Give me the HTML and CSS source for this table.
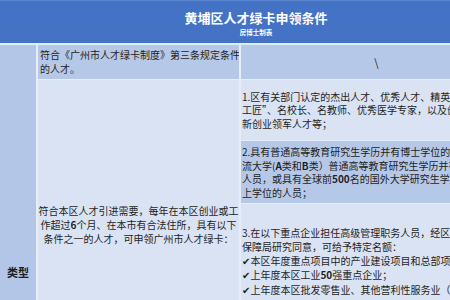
FILE: index.html
```
<!DOCTYPE html>
<html lang="zh">
<head>
<meta charset="utf-8">
<link rel="stylesheet" href="styles.css">
</head>
<body>
<div class="sheet">
  <header class="head">
    <div class="title">黄埔区人才绿卡申领条件</div>
    <div class="sub">房博士制表</div>
  </header>
  <div class="grid">
    <div class="type"><span>类型</span></div>
    <div class="c2 r1 dark"><div class="tx">符合《广州市人才绿卡制度》第三条规定条件<br>的人才。</div></div>
    <div class="c3 r1 dark slash"><div class="tx">\</div></div>
    <div class="c2 r2 light"><div class="tx">符合本区人才引进需要，每年在本区创业或工<br>作超过<b>6</b>个月、在本市有合法住所，具有以下<br>条件之一的人才，可申领广州市人才绿卡：</div></div>
    <div class="c3 s1 light"><div class="tx">1.区有关部门认定的杰出人才、优秀人才、精英人才、“羊城<br>工匠”、名校长、名教师、优秀医学专家，以及创<br>新创业领军人才等；</div></div>
    <div class="c3 s2 dark"><div class="tx">2.具有普通高等教育研究生学历并有博士学位的人员，或一<br>流大学(<b>A</b>类和<b>B</b>类）普通高等教育研究生学历并有硕士<br>人员，或具有全球前<b>500</b>名的国外大学研究生学历并有硕士以<br>上学位的人员；</div></div>
    <div class="c3 s3 light"><div class="tx">3.在以下重点企业担任高级管理职务人员，经区人力资源和社会<br>保障局研究同意，可给予特定名额：<br><i class="ck">✔</i>本区年度重点项目中的产业建设项目和总部项目企业；<br><i class="ck">✔</i>上年度本区工业<b>50</b>强重点企业；<br><i class="ck">✔</i>上年度本区批发零售业、其他营利性服务业（<br>服务、软件和信息技术服务业、租赁和商务服务业）</div></div>
  </div>
</div>
</body>
</html>
```
FILE: styles.css
```
html, body {
  margin: 0;
  padding: 0;
  overflow: hidden;
  background: #dae3f3;
}
body {
  width: 450px;
  height: 300px;
  font-family: "Noto Sans CJK SC", "Noto Sans", sans-serif;
  color: #1e1e24;
}
.sheet {
  width: 512px;
}
.head {
  height: 42px;
  background: #4472c4;
  border-top: 1px solid #5a86d2;
  border-bottom: 2px solid #dcf0f8;
  color: #fff;
  text-align: center;
  display: flex;
  flex-direction: column;
  align-items: center;
}
.title {
  font-size: 13px;
  font-weight: 700;
  line-height: 16px;
  margin-top: 9px;
}
.sub {
  font-size: 6.5px;
  font-weight: 700;
  line-height: 8px;
  margin-top: 2px;
}
.grid {
  display: grid;
  grid-template-columns: 36px 201px 271px;
  grid-template-rows: 34px 60px 62px 140px;
  column-gap: 2px;
  row-gap: 1px;
  background: #e6edf8;
  font-size: 10px;
  line-height: 13.5px;
  white-space: nowrap;
}
.grid b {
  font-weight: 700;
}
.dark { background: #b6c8e8; }
.light { background: #dae3f3; }
.type {
  grid-column: 1;
  grid-row: 1 / 5;
  background: #b4c6e7;
  display: flex;
  justify-content: center;
  padding-top: 220px;
  font-size: 11px;
  font-weight: 700;
  line-height: 14px;
}
.c2, .c3 {
  overflow: hidden;
}
.c2 { grid-column: 2; }
.c3 { grid-column: 3; }
.r1 {
  grid-row: 1;
  display: flex;
  align-items: center;
  padding-left: 2px;
  line-height: 14px;
}
.slash {
  justify-content: center;
  font-size: 11px;
  padding-left: 0;
}
.r2 {
  grid-row: 2 / 5;
  text-align: center;
  padding-top: 124px;
  line-height: 14px;
}
.s1, .s2 {
  display: flex;
  align-items: center;
  padding-left: 1px;
}
.s1 { grid-row: 2; }
.s2 { grid-row: 3; }
.s3 {
  grid-row: 4;
  padding-top: 22px;
  padding-left: 1px;
  line-height: 13.8px;
}
.ck {
  font-style: normal;
  font-family: "DejaVu Sans", sans-serif;
  font-size: 10px;
}
```
